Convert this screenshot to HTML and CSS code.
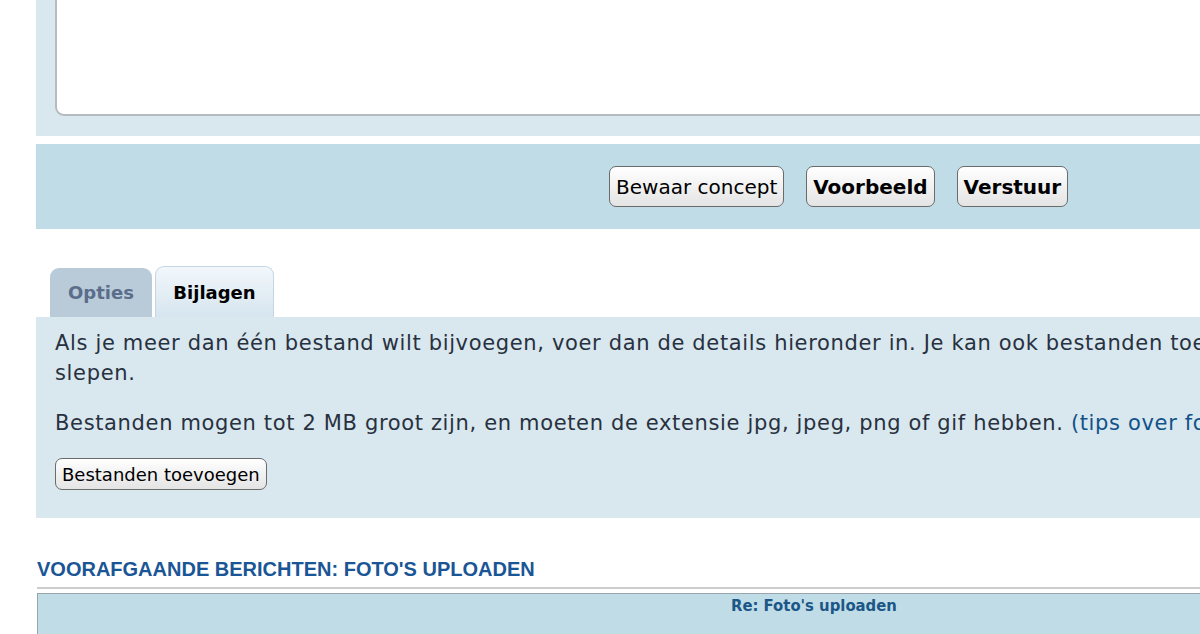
FILE: index.html
```html
<!DOCTYPE html>
<html lang="nl">
<head>
    <meta charset="UTF-8">
    <title>Bericht plaatsen</title>
    <link rel="stylesheet" href="styles.css">
</head>
<body>

    <div class="page">
        <!-- Message box (scrolled) -->
        <div class="panel editor">
            <div class="textarea"></div>
        </div>

        <!-- Submit buttons -->
        <div class="panel submit-bar">
            <button class="btn">Bewaar concept</button>
            <button class="btn bold">Voorbeeld</button>
            <button class="btn bold">Verstuur</button>
        </div>

        <!-- Tabs -->
        <ul class="tabs">
            <li class="tab">Opties</li>
            <li class="tab active">Bijlagen</li>
        </ul>

        <div class="panel attach">
            <p>Als je meer dan één bestand wilt bijvoegen, voer dan de details hieronder in. Je kan ook bestanden toevoegen door ze naar het berichtvenster te<br>slepen.</p>
            <p>Bestanden mogen tot 2 MB groot zijn, en moeten de extensie jpg, jpeg, png of gif hebben. <a href="#">(tips over foto's uploaden)</a></p>
            <button class="btn small">Bestanden toevoegen</button>
        </div>

        <h3 class="review-title">VOORAFGAANDE BERICHTEN: FOTO'S UPLOADEN</h3>
        <div class="review">
            <div class="post-title">Re: Foto's uploaden</div>
        </div>
    </div>

</body>
</html>
```

FILE: styles.css
```css
/* Base */
body {
    margin: 0;
    padding: 0;
    background-color: #ffffff;
    font-family: "DejaVu Sans", Verdana, sans-serif;
    color: #28313f;
    overflow: hidden;
}
.page {
    width: 1900px;
    padding-left: 36px;
}

/* Panels */
.panel {
    background-color: #d9e7ee;
}
.editor {
    height: 136px;
    padding-left: 19px;
    box-sizing: border-box;
}
.textarea {
    height: 116px;
    background-color: #ffffff;
    border: 2px solid #b6bbc1;
    border-top: none;
    border-radius: 0 0 0 9px;
    box-sizing: border-box;
}

.submit-bar {
    margin-top: 8px;
    height: 85px;
    background-color: #c0dde7;
    display: flex;
    align-items: center;
    gap: 22px;
    padding-left: 573px;
    box-sizing: border-box;
}

/* Buttons */
.btn {
    font-family: "DejaVu Sans", Verdana, sans-serif;
    font-size: 20px;
    color: #000;
    height: 41px;
    padding: 0 6px;
    border: 1px solid #6b6b6b;
    border-radius: 7px;
    background: linear-gradient(#ffffff, #e4e4e4);
    cursor: pointer;
}
.btn.bold {
    font-weight: bold;
    padding: 0 6px;
}
.btn.small {
    height: 32px;
    font-size: 18px;
    padding: 0 6px;
}

/* Tabs */
.tabs {
    list-style: none;
    margin: 37px 0 0 0;
    padding: 0 0 0 14px;
    display: flex;
    align-items: flex-end;
    gap: 3px;
    height: 51px;
}
.tab {
    font-size: 18px;
    font-weight: bold;
    height: 49px;
    line-height: 50px;
    box-sizing: border-box;
    border-radius: 9px 9px 0 0;
    text-align: center;
    background-color: #b9cad8;
    color: #5a6d8b;
    width: 102px;
}
.tab.active {
    height: 51px;
    line-height: 52px;
    width: 119px;
    color: #000;
    background: linear-gradient(#f2f7fb, #d6e5ef);
    border: 1px solid #c4d5e3;
    border-bottom: none;
}

.attach {
    height: 201px;
    padding: 11px 0 0 19px;
    box-sizing: border-box;
    font-size: 21px;
    letter-spacing: 0.65px;
}
.attach p {
    margin: 0 0 20px 0;
    line-height: 30px;
    white-space: nowrap;
}
.attach a {
    color: #105289;
    text-decoration: none;
}

/* Review */
.review-title {
    font-family: "Liberation Sans", Arial, sans-serif;
    font-size: 20px;
    font-weight: bold;
    color: #1a5596;
    margin: 40px 0 0 1px;
    padding-bottom: 7px;
    border-bottom: 2px solid #cccccc;
    line-height: 22px;
}
.review {
    margin: 4px 0 0 1px;
    height: 60px;
    background-color: #c0dde7;
    border: 1px solid #9aa5ab;
}
.post-title {
    font-family: "DejaVu Sans Condensed", "DejaVu Sans", sans-serif;
    font-size: 16.5px;
    font-weight: bold;
    color: #1c5687;
    padding: 2px 0 0 693px;
}
```
